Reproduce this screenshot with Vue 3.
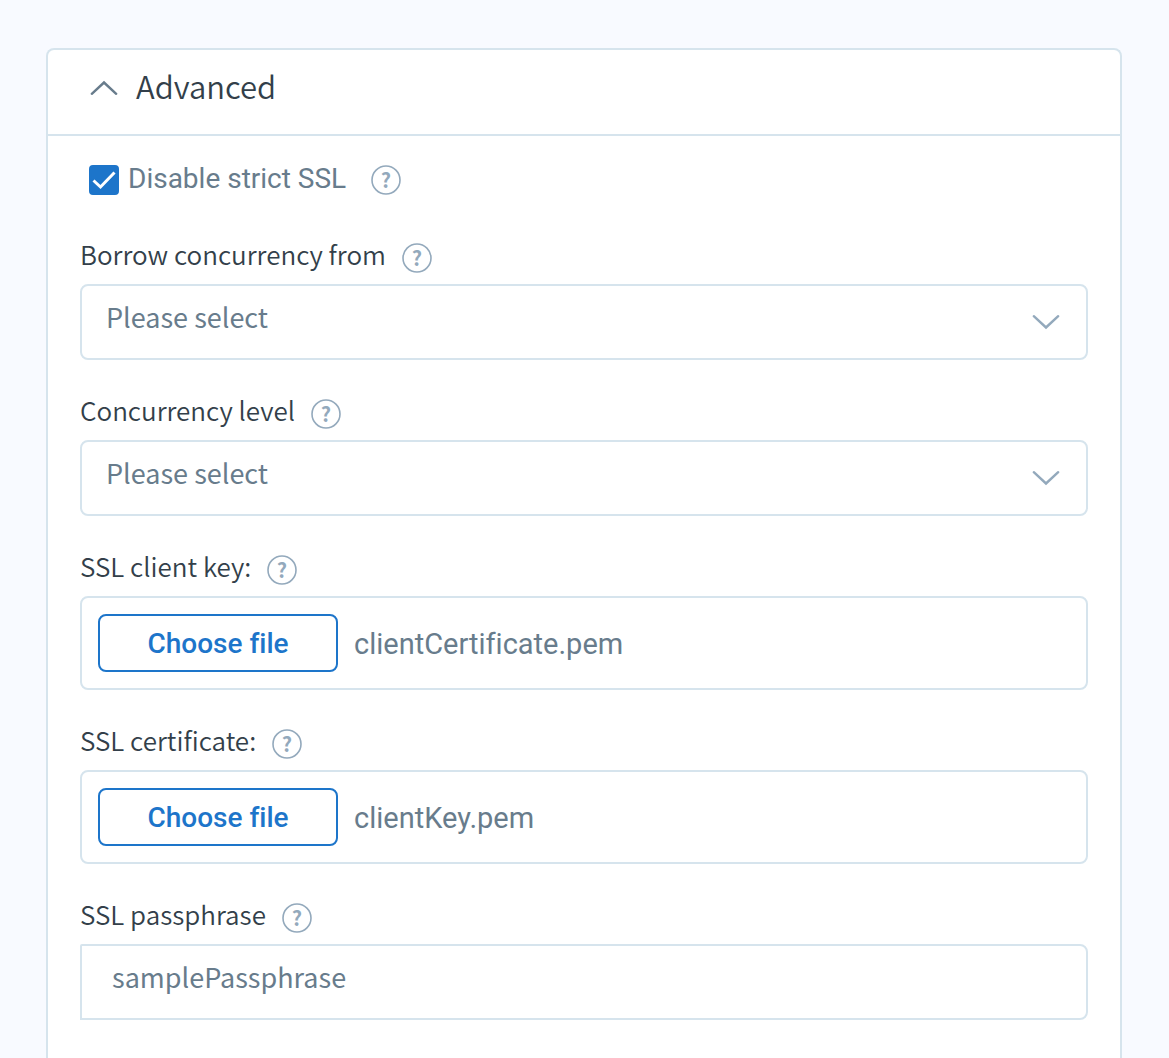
<script setup>
import { ref } from 'vue'

const expanded = ref(true)
const disableStrictSsl = ref(true)
const passphrase = ref('samplePassphrase')

const fields = ref([
  { id: 'borrow', kind: 'select', label: 'Borrow concurrency from', value: '' },
  { id: 'level', kind: 'select', label: 'Concurrency level', value: '' },
  { id: 'client-key', kind: 'file', label: 'SSL client key:', file: 'clientCertificate.pem' },
  { id: 'certificate', kind: 'file', label: 'SSL certificate:', file: 'clientKey.pem' },
  { id: 'passphrase', kind: 'text', label: 'SSL passphrase' },
])

function chooseFile(field) {
  const picker = document.createElement('input')
  picker.type = 'file'
  picker.onchange = () => {
    if (picker.files.length) field.file = picker.files[0].name
  }
  picker.click()
}
</script>

<template>
  <main class="page">
    <section class="card">
      <h2 class="card-title">
        <button class="toggle" type="button" :aria-expanded="expanded" @click="expanded = !expanded">
          <svg class="chevron-up" width="28" height="16" viewBox="0 0 28 16" aria-hidden="true">
            <path d="M1.800 13.800 14 2.500l12.200 11.300" />
          </svg>
          <span class="title-text">Advanced</span>
        </button>
      </h2>

      <div v-if="expanded" class="card-body">
        <div class="check-row">
          <input id="strict-ssl" v-model="disableStrictSsl" class="check" type="checkbox" />
          <label class="check-label" for="strict-ssl">Disable strict SSL</label>
          <button class="help" type="button" aria-label="Help: Disable strict SSL">
            <svg width="30" height="30" viewBox="0 0 30 30" aria-hidden="true">
              <circle cx="15" cy="15" r="14" />
              <text x="15" y="23">?</text>
            </svg>
          </button>
        </div>

        <div v-for="field in fields" :key="field.id" class="field">
          <div class="label-row">
            <label class="label" :for="field.id">{{ field.label }}</label>
            <button class="help" type="button" :aria-label="'Help: ' + field.label">
              <svg width="30" height="30" viewBox="0 0 30 30" aria-hidden="true">
                <circle cx="15" cy="15" r="14" />
                <text x="15" y="23">?</text>
              </svg>
            </button>
          </div>

          <div v-if="field.kind === 'select'" class="select-wrap">
            <select :id="field.id" v-model="field.value" class="control select">
              <option value="">Please select</option>
            </select>
            <svg class="chevron-down" width="28" height="16" viewBox="0 0 28 16" aria-hidden="true">
              <path d="M1.800 2.200 14 13.500l12.200-11.300" />
            </svg>
          </div>

          <div v-else-if="field.kind === 'file'" class="file-box">
            <button :id="field.id" class="file-button" type="button" @click="chooseFile(field)">Choose file</button>
            <span class="file-name">{{ field.file }}</span>
          </div>

          <input v-else :id="field.id" v-model="passphrase" class="control text-input" type="text" />
        </div>
      </div>
    </section>
  </main>
</template>

<style>
body {
  background: #f8faff;
}
</style>

<style scoped>
.page {
  box-sizing: border-box;
  display: flex;
  flex-direction: column;
  min-height: 100vh;
  padding: 48px 47px 0 46px;
  font-family: "Noto Sans CJK SC", "Noto Sans", sans-serif;
  color: #333f4a;
}

.page * {
  box-sizing: border-box;
}

button {
  font-family: inherit;
  cursor: pointer;
}

.card {
  flex: 1;
  background: #fff;
  border: 2px solid #d6e4ed;
  border-bottom: 0;
  border-radius: 8px 8px 0 0;
}

.card-title {
  margin: 0;
  border-bottom: 2px solid #d6e4ed;
}

.toggle {
  display: flex;
  align-items: center;
  gap: 18px;
  width: 100%;
  height: 84px;
  padding: 0 42px 8px;
  border: 0;
  background: none;
  color: inherit;
  font-size: 31px;
  font-weight: 350;
  line-height: 40px;
}

.title-text {
  padding-bottom: 4px;
}

.chevron-up,
.chevron-down {
  fill: none;
  stroke-width: 2.4;
  stroke-linecap: round;
}

.chevron-up {
  stroke: #687c8c;
}

.card-body {
  display: flex;
  flex-direction: column;
  gap: 36px;
  padding: 24px 32px 38px;
}

.check-row {
  display: flex;
  align-items: center;
  height: 40px;
  margin: 0 9px 4px;
}

.check {
  appearance: none;
  width: 30px;
  height: 30px;
  margin: 0 9px 0 0;
  border: 2px solid #1d75ca;
  border-radius: 4px;
}

.check:checked {
  background: #1d75ca url("data:image/svg+xml,%3Csvg xmlns='http://www.w3.org/2000/svg' viewBox='0 0 30 30'%3E%3Cpath d='M4.500 15.500l7 6.500L25.500 7.500' fill='none' stroke='white' stroke-width='3'/%3E%3C/svg%3E") center / 30px 30px;
}

.check-label {
  margin-right: 25px;
  padding-bottom: 2px;
  font-family: Roboto, sans-serif;
  font-size: 28px;
  line-height: 36px;
  color: #687c8c;
}

.help {
  width: 30px;
  height: 30px;
  padding: 0;
  border: 0;
  background: none;
}

.help svg {
  display: block;
}

.help circle {
  fill: none;
  stroke: #93a9bc;
  stroke-width: 1.6;
}

.help text {
  fill: #93a9bc;
  font-size: 20px;
  font-weight: 700;
  text-anchor: middle;
}

.label-row {
  display: flex;
  align-items: center;
  gap: 16px;
  height: 36px;
  margin-bottom: 8px;
}

.label {
  padding-bottom: 8px;
  font-size: 26px;
  font-weight: 350;
  line-height: 32px;
}

.select-wrap {
  display: grid;
  align-items: center;
}

.select-wrap > * {
  grid-area: 1 / 1;
}

.chevron-down {
  justify-self: end;
  margin-right: 28px;
  stroke: #93a9bc;
  pointer-events: none;
}

.control {
  width: 100%;
  height: 76px;
  margin: 0;
  border: 2px solid #d6e4ed;
  border-radius: 8px;
  background: #fff;
  color: #687c8c;
  font-family: inherit;
  font-size: 27px;
}

.select {
  appearance: none;
  padding: 0 64px 12px 24px;
}

.text-input {
  display: block;
  padding: 0 30px 12px;
  border-radius: 2px 8px 8px 0;
}

.file-box {
  display: flex;
  align-items: center;
  gap: 16px;
  padding: 16px;
  border: 2px solid #d6e4ed;
  border-radius: 8px;
  font-variant-ligatures: none;
}

.file-button {
  width: 240px;
  height: 58px;
  padding: 0;
  border: 2px solid #1d75ca;
  border-radius: 8px;
  background: #fff;
  color: #1d75ca;
  font-family: Roboto, sans-serif;
  font-size: 28px;
  font-weight: 500;
  font-variant-ligatures: none;
}

.file-name {
  padding-top: 2px;
  font-family: Roboto, sans-serif;
  font-size: 29px;
  line-height: 36px;
  color: #687c8c;
}
</style>
